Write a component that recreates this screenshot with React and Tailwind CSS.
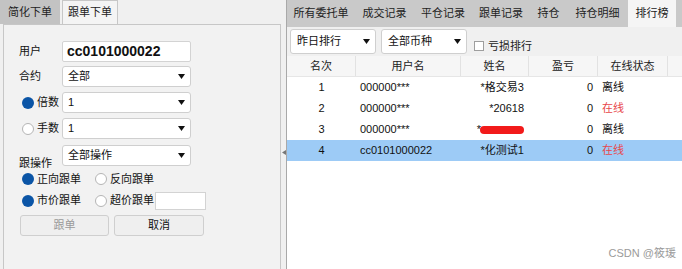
import React from 'react';

const font = { fontFamily: '"Liberation Sans", "Noto Sans CJK SC", sans-serif' };

function Arrow() {
    return (
        <svg width="7" height="5" viewBox="0 0 7 5" className="shrink-0">
            <polygon points="0,0 7,0 3.5,5" fill="#111" />
        </svg>
    );
}

function Select({ value, className = '' }) {
    return (
        <div className={`flex items-center justify-between bg-white border border-[#cfcfcf] rounded-[3px] pl-[5px] pr-[5px] text-[11px] text-[#111] ${className}`}>
            <span>{value}</span>
            <Arrow />
        </div>
    );
}

function Radio({ on }) {
    return on ? (
        <span className="w-[12px] h-[12px] rounded-full bg-[#0b55a6] shrink-0" />
    ) : (
        <span className="w-[12px] h-[12px] rounded-full bg-white border border-[#b5b5b5] shrink-0" />
    );
}

function LeftPanel() {
    return (
        <div className="w-[281px] h-full flex flex-col bg-[#f0f0f0]">
            {/* tabs */}
            <div className="flex h-[24px] text-[11px] text-[#222]">
                <div className="w-[60px] flex items-center justify-center bg-[#c3c3c3]">简化下单</div>
                <div className="w-[56px] ml-[2px] flex items-center justify-center bg-[#f4f4f4] border border-[#c7c7c7] border-b-0">跟单下单</div>
            </div>
            {/* form box */}
            <div className="flex-1 ml-[3px] w-[278px] border border-[#c7c7c7] border-b-0 bg-[#f2f2f2] pt-[16px] pl-[15px] text-[11px] text-[#111]">
                <div className="flex items-center h-[21px]">
                    <span className="w-[43px]">用户</span>
                    <div className="w-[129px] h-[21px] bg-white border border-[#d3d3d3] rounded-[2px] pl-[4px] flex items-center text-[14px] font-bold text-[#111]">cc0101000022</div>
                </div>
                <div className="flex items-center h-[21px] mt-[4px]">
                    <span className="w-[43px]">合约</span>
                    <Select value="全部" className="w-[129px] h-[21px]" />
                </div>
                <div className="flex items-center h-[21px] mt-[5px]">
                    <span className="w-[43px] flex items-center gap-[3px] pl-[3px]"><Radio on />倍数</span>
                    <Select value="1" className="w-[129px] h-[21px]" />
                </div>
                <div className="flex items-center h-[21px] mt-[5px]">
                    <span className="w-[43px] flex items-center gap-[3px] pl-[3px]"><Radio />手数</span>
                    <Select value="1" className="w-[129px] h-[21px]" />
                </div>
                <div className="flex items-end h-[21px] mt-[6px]">
                    <span className="w-[43px] leading-none pb-[1px] -mb-[4px]">跟操作</span>
                    <Select value="全部操作" className="w-[129px] h-[21px]" />
                </div>
                <div className="flex items-center h-[18px] mt-[4px] pl-[3px]">
                    <span className="w-[73px] flex items-center gap-[3px]"><Radio on />正向跟单</span>
                    <span className="flex items-center gap-[3px]"><Radio />反向跟单</span>
                </div>
                <div className="flex items-center h-[21px] mt-[2px] pl-[3px]">
                    <span className="w-[73px] flex items-center gap-[3px]"><Radio on />市价跟单</span>
                    <span className="flex items-center gap-[3px]"><Radio />超价跟单</span>
                    <div className="ml-[1px] w-[51px] h-[18px] bg-white border border-[#d3d3d3]" />
                </div>
                <div className="flex gap-[5px] mt-[4px] pl-[1px]">
                    <button className="w-[89px] h-[21px] bg-[#efefef] border border-[#cfcfcf] rounded-[3px] text-[#9a9a9a]">跟单</button>
                    <button className="w-[90px] h-[21px] bg-[#efefef] border border-[#cfcfcf] rounded-[3px] text-[#111]">取消</button>
                </div>
            </div>
        </div>
    );
}

function Splitter() {
    return (
        <div className="w-[5px] h-full bg-[#f0f0f0] flex items-center justify-center">
            <svg width="4" height="5" viewBox="0 0 4 5" className="mt-[36px]">
                <polygon points="4,0 4,5 0,2.5" fill="#777" />
            </svg>
        </div>
    );
}

const tabs = [
    ['所有委托单', 'w-[68px]'],
    ['成交记录', 'w-[59px]'],
    ['平仓记录', 'w-[58px]'],
    ['跟单记录', 'w-[58px]'],
    ['持仓', 'w-[37px]'],
    ['持仓明细', 'w-[61px]'],
];

const rows = [
    { rank: 1, user: '000000***', name: '*格交易3', pnl: 0, online: false },
    { rank: 2, user: '000000***', name: '*20618', pnl: 0, online: true },
    { rank: 3, user: '000000***', name: null, pnl: 0, online: false },
    { rank: 4, user: 'cc0101000022', name: '*化测试1', pnl: 0, online: true, selected: true },
];

function RightPanel() {
    return (
        <div className="flex-1 h-full flex flex-col border-l border-[#a9a9a9] bg-white">
            {/* tabs */}
            <div className="flex h-[27px] bg-[#c9c9c9] text-[11px] text-[#222]">
                {tabs.map(([label, w]) => (
                    <div key={label} className={`${w} flex items-center justify-center`}>{label}</div>
                ))}
                <div className="w-[48px] flex items-center justify-center bg-[#f5f5f5]">排行榜</div>
            </div>
            {/* toolbar */}
            <div className="flex items-center h-[29px] bg-[#f0f0f0] pl-[3px] text-[11px] text-[#111]">
                <Select value="昨日排行" className="w-[86px] h-[25px] pl-[6px]" />
                <Select value="全部币种" className="w-[86px] h-[25px] ml-[5px] pl-[6px]" />
                <div className="flex items-center ml-[7px] mt-[9px] gap-[4px] text-[#222]">
                    <span className="w-[10px] h-[10px] bg-white border border-[#9e9e9e]" />
                    亏损排行
                </div>
            </div>
            {/* header */}
            <div className="flex h-[21px] bg-[#f6f6f6] border-b border-[#e6e6e6] text-[11px] text-[#222]">
                <div className="w-[69px] flex items-center justify-center border-r border-[#e2e2e2]">名次</div>
                <div className="w-[105px] flex items-center justify-center border-r border-[#e2e2e2]">用户名</div>
                <div className="w-[68px] flex items-center justify-center border-r border-[#e2e2e2]">姓名</div>
                <div className="w-[69px] flex items-center justify-center border-r border-[#e2e2e2]">盈亏</div>
                <div className="w-[70px] flex items-center justify-center border-r border-[#e2e2e2]">在线状态</div>
            </div>
            {/* rows */}
            {rows.map((r) => (
                <div key={r.rank} className={`flex h-[21px] text-[11px] text-[#111] ${r.selected ? 'bg-[#9dcbf6]' : 'bg-white'}`}>
                    <div className="w-[69px] flex items-center justify-center">{r.rank}</div>
                    <div className="w-[105px] flex items-center pl-[4px]">{r.user}</div>
                    <div className="w-[68px] flex items-center justify-end pr-[5px]">
                        {r.name ?? (
                            <span className="flex items-center">
                                <span>*</span>
                                <span className="w-[44px] h-[8px] rounded-full bg-[#f21a1a] -ml-[1px]" />
                            </span>
                        )}
                    </div>
                    <div className="w-[69px] flex items-center justify-end pr-[5px]">{r.pnl}</div>
                    <div className={`w-[70px] flex items-center pl-[4px] ${r.online ? 'text-[#e8474b]' : 'text-[#111]'}`}>{r.online ? '在线' : '离线'}</div>
                </div>
            ))}
            <div className="flex-1" />
            <div className="flex justify-end pr-[6px] pb-[8px] text-[11px] text-[#9a9a9a]">CSDN @筱瑗</div>
        </div>
    );
}

export default function App() {
    return (
        <div className="w-[682px] h-[269px] flex bg-[#f0f0f0] overflow-hidden" style={font}>
            <LeftPanel />
            <Splitter />
            <RightPanel />
        </div>
    );
}
